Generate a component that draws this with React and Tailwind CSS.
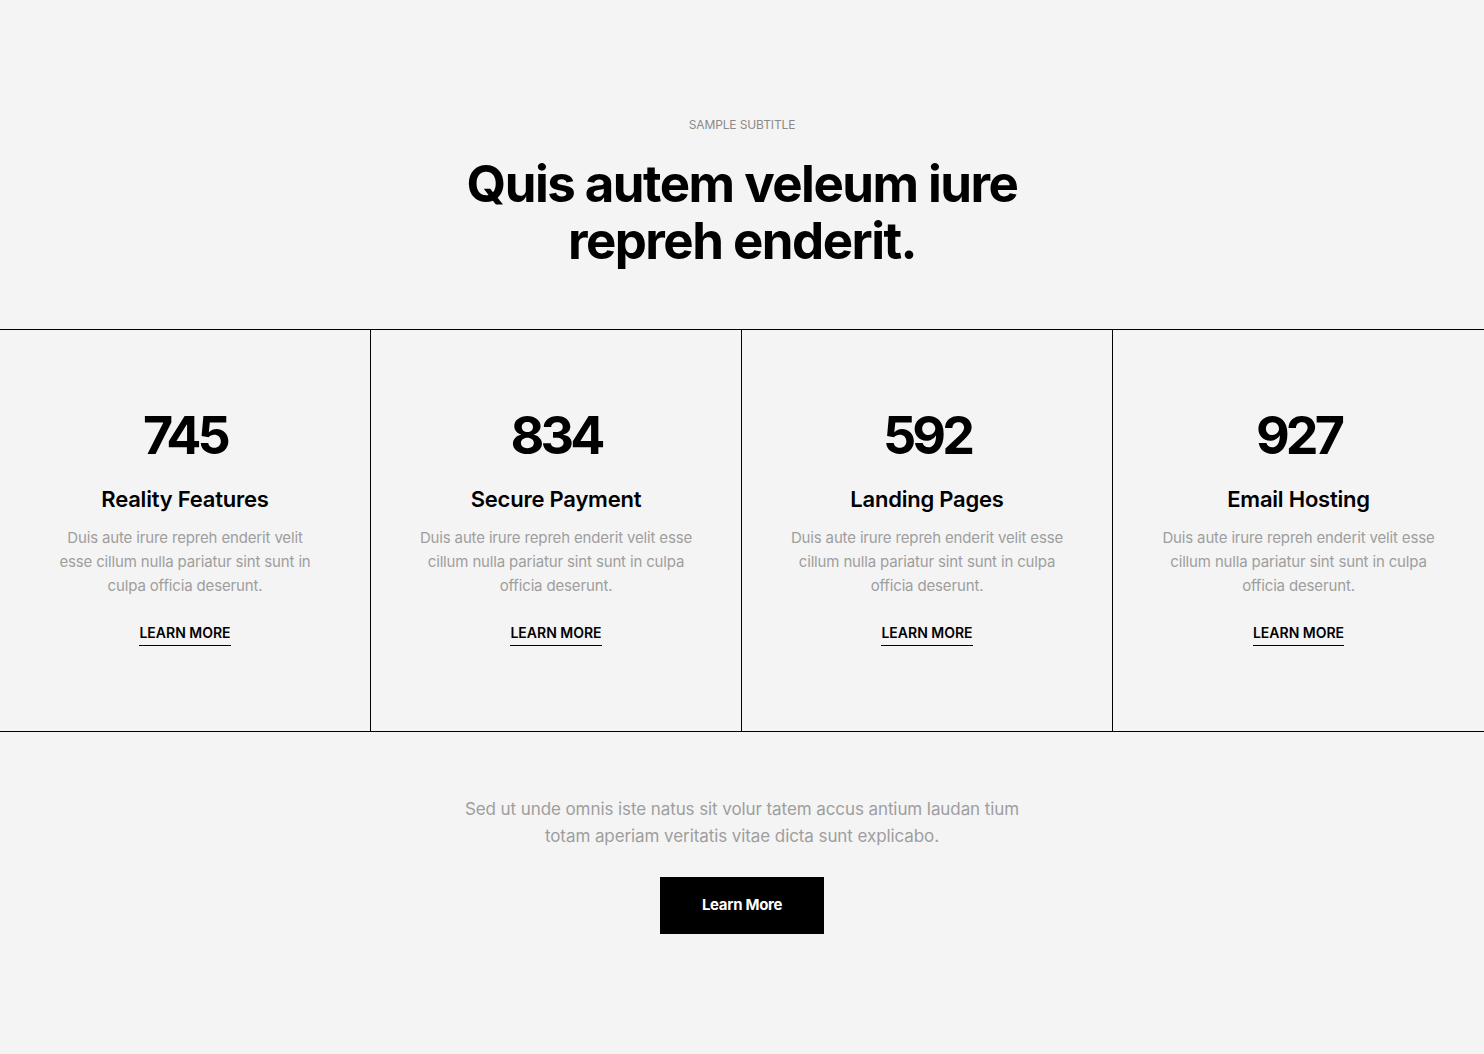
import React from 'react';

const stats = [
  {
    value: '745',
    title: 'Reality Features',
    lines: ['Duis aute irure repreh enderit velit', 'esse cillum nulla pariatur sint sunt in', 'culpa officia deserunt.'],
  },
  {
    value: '834',
    title: 'Secure Payment',
    lines: ['Duis aute irure repreh enderit velit esse', 'cillum nulla pariatur sint sunt in culpa', 'officia deserunt.'],
  },
  {
    value: '592',
    title: 'Landing Pages',
    lines: ['Duis aute irure repreh enderit velit esse', 'cillum nulla pariatur sint sunt in culpa', 'officia deserunt.'],
  },
  {
    value: '927',
    title: 'Email Hosting',
    lines: ['Duis aute irure repreh enderit velit esse', 'cillum nulla pariatur sint sunt in culpa', 'officia deserunt.'],
  },
];

export default function App() {
  return (
    <div className="min-h-screen bg-[#f4f4f4] text-black font-['Inter','Liberation_Sans',sans-serif]">
      {/* Header */}
      <div className="pt-[117px] text-center">
        <p className="text-[12px] leading-4 uppercase text-[#8a8a8a] tracking-[-0.01em]">Sample Subtitle</p>
        <h2 className="mt-[22px] text-[51px] leading-[57px] font-bold tracking-[-0.03em]">
          Quis autem veleum iure
          <br />
          repreh enderit.
        </h2>
      </div>

      {/* Stats grid */}
      <div className="mt-[60px] grid grid-cols-4 border-y border-black">
        {stats.map((s, i) => (
          <div
            key={s.value}
            className={`flex flex-col items-center text-center pt-[76px] pb-[85px] ${i < 3 ? 'border-r border-black' : ''}`}
          >
            <div className="text-[52px] leading-[60px] font-bold tracking-[-0.075em]">{s.value}</div>
            <h3 className="mt-[18px] text-[22px] leading-[30px] font-semibold tracking-[-0.01em]">{s.title}</h3>
            <p className="mt-[12px] text-[15px] leading-6 text-[#9e9e9e] tracking-[-0.01em]">
              {s.lines.map((l, j) => (
                <span key={j} className="block">{l}</span>
              ))}
            </p>
            <a href="#" className="mt-[25px] text-[14px] leading-5 font-semibold uppercase pb-[2px] border-b border-black">
              Learn More
            </a>
          </div>
        ))}
      </div>

      {/* Footer CTA */}
      <div className="pt-[64px] pb-[120px] flex flex-col items-center text-center">
        <p className="text-[17px] leading-[27px] text-[#9e9e9e] tracking-[-0.005em]">
          Sed ut unde omnis iste natus sit volur tatem accus antium laudan tium
          <br />
          totam aperiam veritatis vitae dicta sunt explicabo.
        </p>
        <button className="mt-[27px] w-[164px] h-[57px] bg-black text-white text-[15px] font-bold tracking-[-0.02em]">
          Learn More
        </button>
      </div>
    </div>
  );
}
